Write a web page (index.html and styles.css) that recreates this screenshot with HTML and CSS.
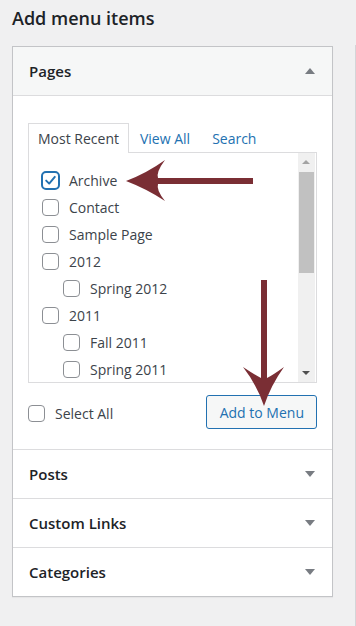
FILE: index.html
```html
<!DOCTYPE html>
<html lang="en">
<head>
    <meta charset="UTF-8">
    <meta name="viewport" content="width=device-width, initial-scale=1.0">
    <title>Menus</title>
    <link rel="stylesheet" href="styles.css">
</head>
<body>
    <div class="layout">
        <div class="menu-settings">
            <h2>Add menu items</h2>
            <div class="accordion">
                <div class="section open">
                    <h3 class="section-title">Pages <span class="toggle up"></span></h3>
                    <div class="section-content">
                        <ul class="tabs">
                            <li class="tab active">Most Recent</li>
                            <li class="tab"><a href="#">View All</a></li>
                            <li class="tab"><a href="#">Search</a></li>
                        </ul>
                        <div class="tabs-panel">
                            <ul class="checklist">
                                <li><span class="check checked"><svg viewBox="0 0 17 17" width="17" height="17"><path d="M3.6 8.6 L7 12 L13.4 4.4" fill="none" stroke="#2271b1" stroke-width="2.2" stroke-linecap="round" stroke-linejoin="round"/></svg></span>Archive</li>
                                <li><span class="check"></span>Contact</li>
                                <li><span class="check"></span>Sample Page</li>
                                <li><span class="check"></span>2012</li>
                                <li class="child"><span class="check"></span>Spring 2012</li>
                                <li><span class="check"></span>2011</li>
                                <li class="child"><span class="check"></span>Fall 2011</li>
                                <li class="child"><span class="check"></span>Spring 2011</li>
                            </ul>
                            <div class="scrollbar">
                                <span class="sb-arrow sb-up"></span>
                                <span class="sb-thumb"></span>
                                <span class="sb-arrow sb-down"></span>
                            </div>
                        </div>
                        <div class="actions">
                            <label class="select-all"><span class="check"></span>Select All</label>
                            <button class="button">Add to Menu</button>
                        </div>
                    </div>
                </div>
                <div class="section">
                    <h3 class="section-title">Posts <span class="toggle"></span></h3>
                </div>
                <div class="section">
                    <h3 class="section-title">Custom Links <span class="toggle"></span></h3>
                </div>
                <div class="section">
                    <h3 class="section-title">Categories <span class="toggle"></span></h3>
                </div>
            </div>
        </div>
        <div class="menu-edit"></div>
    </div>

    <!-- annotation arrows drawn over the screenshot -->
    <svg class="annotations" width="356" height="626" viewBox="0 0 356 626">
        <path d="M126 181 Q147 173 165 160 Q156 172 158 178 L253 178 L253 184 L158 184 Q156 190 165 201 Q147 189 126 181 Z" fill="#7a2e34"/>
        <path d="M264 406 Q257 385 243 367 Q255 375 261 378 L261 280 L267 280 L267 378 Q273 375 284 367 Q271 385 264 406 Z" fill="#7a2e34"/>
    </svg>
</body>
</html>
```

FILE: styles.css
```css
body {
    margin: 0;
    padding: 0;
    background-color: #f0f0f1;
    color: #3c434a;
    font-family: 'Open Sans', 'Noto Sans', sans-serif;
    font-size: 14px;
}
.layout {
    display: flex;
    height: 626px;
}
.menu-settings {
    width: 321px;
    padding-left: 12px;
}
.menu-edit {
    margin-left: auto;
    margin-top: 45px;
    width: 0;
    border-left: 1px solid #d4d5d8;
}
h2 {
    margin: 0;
    height: 46px;
    line-height: 36px;
    font-size: 18px;
    font-weight: 600;
    color: #1d2327;
}
.accordion {
    background-color: #fff;
    border: 1px solid #c3c4c7;
    box-shadow: 0 1px 1px rgba(0, 0, 0, 0.04);
}
.section + .section {
    border-top: 1px solid #dcdcde;
}
.section-title {
    margin: 0;
    height: 48px;
    padding: 0 17px 0 16px;
    display: flex;
    align-items: center;
    justify-content: space-between;
    font-size: 15px;
    font-weight: 600;
    color: #1d2327;
}
.open .section-title {
    background-color: #f6f7f7;
    border-bottom: 1px solid #dcdcde;
}
.toggle {
    width: 0;
    height: 0;
    border-left: 5px solid transparent;
    border-right: 5px solid transparent;
    border-top: 6px solid #787c82;
}
.toggle.up {
    border-top: none;
    border-bottom: 6px solid #787c82;
}
.section-content {
    padding: 27px 15px 20px;
}
.tabs {
    list-style: none;
    margin: 0 0 -1px;
    padding: 0;
    display: flex;
    position: relative;
}
.tab {
    height: 29px;
    line-height: 29px;
    padding: 0 10px;
    border: 1px solid transparent;
    border-bottom: none;
}
.tab.active {
    padding: 0 9px;
    border-color: #dcdcde;
    background-color: #fff;
    color: #3c434a;
}
.tab a {
    color: #2271b1;
    text-decoration: none;
}
.tabs-panel {
    display: flex;
    height: 229px;
    border: 1px solid #dcdcde;
    overflow: hidden;
}
.checklist {
    flex: 1;
    list-style: none;
    margin: 0;
    padding: 14px 0 0 13px;
}
.checklist li {
    height: 27px;
    display: flex;
    align-items: center;
    white-space: nowrap;
}
.checklist li.child {
    padding-left: 21px;
}
.check {
    flex: none;
    width: 17px;
    height: 17px;
    box-sizing: border-box;
    margin-right: 10px;
    border: 1px solid #8c8f94;
    border-radius: 4px;
    background-color: #fff;
    display: inline-flex;
    align-items: center;
    justify-content: center;
}
.check svg {
    display: block;
}
.check.checked {
    border: 2px solid #2271b1;
    border-radius: 5px;
    width: 19px;
    height: 19px;
    margin-left: -1px;
    margin-right: 9px;
}
.scrollbar {
    flex: none;
    width: 17px;
    margin-right: 1px;
    background-color: #f0f0f0;
    display: flex;
    flex-direction: column;
    align-items: center;
}
.sb-arrow {
    flex: none;
    height: 17px;
    width: 17px;
    position: relative;
}
.sb-arrow::after {
    content: '';
    position: absolute;
    left: 4px;
    border-left: 4px solid transparent;
    border-right: 4px solid transparent;
}
.sb-up::after {
    top: 7px;
    border-bottom: 4px solid #a3a3a3;
}
.sb-down {
    margin-top: auto;
}
.sb-down::after {
    top: 6px;
    border-top: 4px solid #505050;
}
.sb-thumb {
    width: 15px;
    height: 101px;
    margin-top: 2px;
    background-color: #c1c1c1;
}
.actions {
    margin-top: 12px;
    display: flex;
    align-items: center;
    justify-content: space-between;
}
.select-all {
    display: flex;
    align-items: center;
    margin-top: 3px;
}
.button {
    height: 34px;
    padding: 0 12px 0 13px;
    font-family: inherit;
    font-size: 14px;
    color: #2271b1;
    background-color: #f6f7f7;
    border: 1px solid #2271b1;
    border-radius: 3px;
    cursor: pointer;
}
.annotations {
    position: absolute;
    left: 0;
    top: 0;
    pointer-events: none;
}
```
